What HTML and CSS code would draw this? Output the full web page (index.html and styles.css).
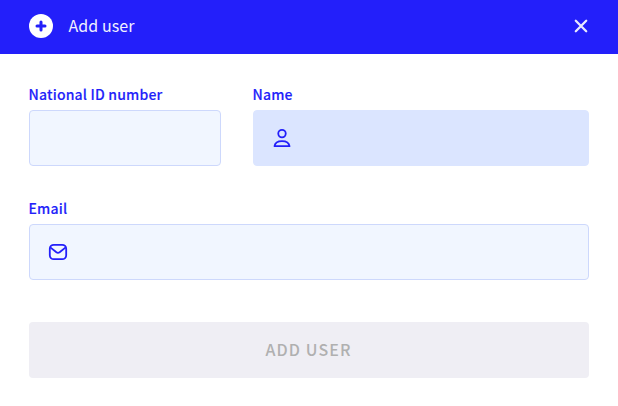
FILE: index.html
```html
<!DOCTYPE html>
<html lang="en">
<head>
<meta charset="utf-8">
<title>Add user</title>
<link rel="stylesheet" href="styles.css">
</head>
<body>
<header class="header">
  <svg class="plus" width="24" height="24" viewBox="0 0 24 24"><circle cx="12" cy="12" r="12" fill="#fff"/><path d="M12 8v8M8 12h8" stroke="#231ffa" stroke-width="3" stroke-linecap="round"/></svg>
  <h1 class="title">Add user</h1>
  <svg class="close" width="14" height="14" viewBox="0 0 14 14"><path d="M1.8 1.8l10.4 10.4M12.2 1.8L1.8 12.2" stroke="#e9e9ff" stroke-width="2.3" stroke-linecap="round"/></svg>
</header>
<main class="form">
  <div class="row">
    <div class="field">
      <div class="label">National ID number</div>
      <div class="input"></div>
    </div>
    <div class="field">
      <div class="label">Name</div>
      <div class="input active">
        <svg class="icon" width="20" height="20" viewBox="0 0 20 20"><circle cx="10" cy="5.6" r="3.75"/><path d="M2.5 18.2h15c-.5-3.2-3.7-5.1-7.5-5.1s-7 1.9-7.5 5.1z"/></svg>
      </div>
    </div>
  </div>
  <div class="field">
    <div class="label">Email</div>
    <div class="input">
      <svg class="icon" width="20" height="20" viewBox="0 0 20 20"><rect x="1.8" y="2.8" width="16.4" height="14.4" rx="4"/><path d="M2.3 5.4l6.1 4.9q1.6 1.2 3.2 0l6.1-4.9"/></svg>
    </div>
  </div>
  <button class="submit" disabled>ADD USER</button>
</main>
</body>
</html>
```
FILE: styles.css
```css
* { box-sizing: border-box; }
body {
  margin: 0;
  background: #fff;
  color: #231ffa;
  font-family: "Noto Sans CJK SC", "Noto Sans", sans-serif;
}
.header {
  display: flex;
  align-items: center;
  height: 54px;
  padding: 0 30px 2px 29px;
  background: #231ffa;
}
.title {
  flex: 1;
  margin: 0 0 0 15.6px;
  padding-bottom: 2px;
  color: #f1f1ff;
  font-size: 16px;
  line-height: 24px;
  font-weight: 400;
  letter-spacing: 0.05px;
}
.form { padding: 31px 29px 0; }
.row {
  display: grid;
  grid-template-columns: 192px 336px;
  gap: 32px;
  margin-bottom: 33px;
}
.label {
  height: 25px;
  margin-left: -0.5px;
  font-size: 14px;
  line-height: 18px;
  font-weight: 500;
  letter-spacing: 0.18px;
  -webkit-text-stroke: 0.15px #231ffa;
}
.input {
  display: flex;
  align-items: center;
  height: 56px;
  padding-left: 18px;
  border: 1px solid #cdd8fc;
  border-radius: 4px;
  background: #f1f6ff;
}
.input.active {
  background: #dbe5ff;
  border-color: #dbe5ff;
}
.icon {
  fill: none;
  stroke: #231ffa;
  stroke-width: 1.8;
  stroke-linejoin: round;
}
.submit {
  display: block;
  width: 100%;
  height: 56px;
  margin-top: 42px;
  padding: 0 1px 2px 0;
  border: 0;
  border-radius: 4px;
  background: #efeef4;
  color: #b0b0b0;
  font: 500 16px/24px "Noto Sans CJK SC", "Noto Sans", sans-serif;
  letter-spacing: 1.1px;
}
```
